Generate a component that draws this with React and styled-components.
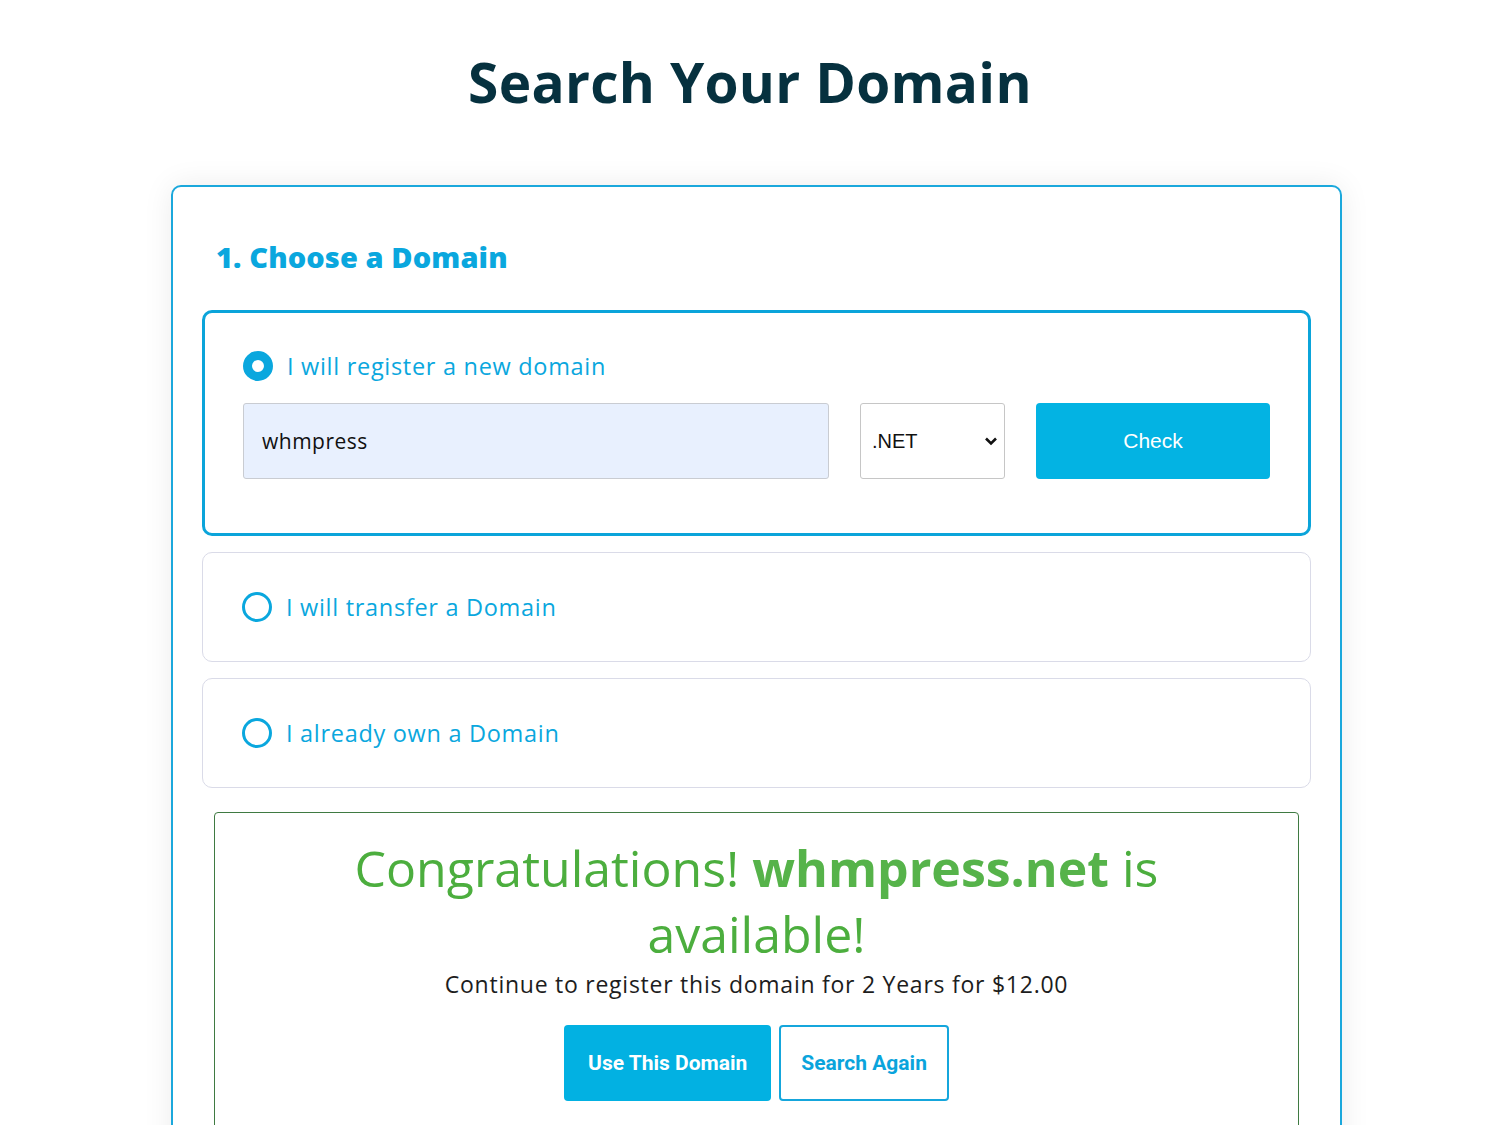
import styled, { createGlobalStyle } from 'styled-components'

const GlobalStyle = createGlobalStyle`
    body {
        margin: 0;
        background: #ffffff;
        font-family: "Open Sans", "Noto Sans", sans-serif;
    }
`

const Page = styled.main`
    padding-top: 44px;
    padding-bottom: 40px;
`

const Title = styled.h1`
    margin: 0;
    text-align: center;
    color: #06313f;
    font-size: 55px;
    font-weight: 700;
    line-height: 76px;
    letter-spacing: 0.3px;
`

const Card = styled.section`
    width: 1171px;
    box-sizing: border-box;
    margin: 65px 0 0 171px;
    padding: 0 29px 40px;
    border: 2px solid #1ba8dc;
    border-radius: 10px;
    background: #fff;
    box-shadow: 0 0 30px rgba(0, 0, 0, 0.08);
`

const StepTitle = styled.h2`
    margin: 50px 0 33px 14px;
    color: #0aa7de;
    font-size: 29px;
    font-weight: 800;
    line-height: 40px;
    letter-spacing: 0.1px;
`

const Option = styled.div`
    box-sizing: border-box;
    display: flex;
    flex-direction: column;
    gap: 22px;
    margin-top: ${({ $first }) => ($first ? '0' : '16px')};
    padding: ${({ $active }) => ($active ? '38px 38px 54px' : '39px 39px')};
    border: ${({ $active }) => ($active ? '3px solid #0ba4da' : '1px solid #dadbe8')};
    border-radius: 10px;
    background: #fff;
`

const RadioRow = styled.label`
    display: flex;
    align-items: center;
    gap: 14px;
    color: #0aa7de;
    font-size: 23.5px;
    line-height: 30px;
    letter-spacing: 0.7px;
`

const Radio = styled.span`
    box-sizing: border-box;
    width: 30px;
    height: 30px;
    border-radius: 50%;
    border: ${({ $checked }) => ($checked ? '9px' : '3px')} solid #0aa7de;
    background: #fff;
    flex-shrink: 0;
`

const SearchRow = styled.div`
    display: flex;
    gap: 31px;
    height: 76px;
`

const DomainInput = styled.div`
    box-sizing: border-box;
    width: 586px;
    display: flex;
    align-items: center;
    padding-left: 18px;
    background: #e8f0fe;
    border: 1px solid #c9ccd2;
    border-radius: 3px;
    color: #111;
    font-size: 21px;
    letter-spacing: 0.5px;
`

const TldSelect = styled.div`
    box-sizing: border-box;
    width: 145px;
    display: flex;
    align-items: center;
    justify-content: space-between;
    padding: 0 6px 0 11px;
    border: 1px solid #c6c6c6;
    border-radius: 3px;
    color: #111;
    font-family: "Liberation Sans", Arial, sans-serif;
    font-size: 20px;
`

const CheckButton = styled.button`
    width: 234px;
    border: none;
    border-radius: 4px;
    background: #03b3e3;
    color: #fff;
    font-family: "Liberation Sans", Arial, sans-serif;
    font-size: 21px;
    padding-bottom: 2px;
`

const Result = styled.div`
    margin: 24px 12px 0;
    padding: 22px 20px 40px;
    border: 1px solid #3f7a42;
    border-radius: 4px;
    text-align: center;
`

const Congrats = styled.p`
    margin: 0;
    color: #4cae3e;
    font-size: 50px;
    font-weight: 400;
    line-height: 66px;
    strong {
        font-weight: 700;
        color: #56b34a;
    }
`

const Continue = styled.p`
    margin: 0 0 24px;
    color: #1d1d1d;
    font-size: 23px;
    line-height: 34px;
    letter-spacing: 0.75px;
`

const Actions = styled.div`
    display: flex;
    justify-content: center;
    gap: 8px;
`

const ActionButton = styled.button`
    box-sizing: border-box;
    height: 76px;
    padding: 0 ${({ $outline }) => ($outline ? '20px' : '24px')};
    border: ${({ $outline }) => ($outline ? '2px solid #15a6dc' : 'none')};
    border-radius: 4px;
    background: ${({ $outline }) => ($outline ? '#fff' : '#02b1e2')};
    color: ${({ $outline }) => ($outline ? '#0aa4dc' : '#fff')};
    font-family: Roboto, "Liberation Sans", sans-serif;
    font-size: 21px;
    font-weight: 700;
`

function Chevron() {
    return (
        <svg width="14" height="10" viewBox="0 0 14 10">
            <path d="M2 2.5 L7 7.5 L12 2.5" fill="none" stroke="#111" strokeWidth="2.6" />
        </svg>
    )
}

export default function App() {
    return (
        <Page>
            <GlobalStyle />
            <Title>Search Your Domain</Title>
            <Card>
                <StepTitle>1. Choose a Domain</StepTitle>
                <Option $active $first>
                    <RadioRow>
                        <Radio $checked />
                        I will register a new domain
                    </RadioRow>
                    <SearchRow>
                        <DomainInput>whmpress</DomainInput>
                        <TldSelect>
                            .NET
                            <Chevron />
                        </TldSelect>
                        <CheckButton>Check</CheckButton>
                    </SearchRow>
                </Option>
                <Option>
                    <RadioRow>
                        <Radio />
                        I will transfer a Domain
                    </RadioRow>
                </Option>
                <Option>
                    <RadioRow>
                        <Radio />
                        I already own a Domain
                    </RadioRow>
                </Option>
                <Result>
                    <Congrats>
                        Congratulations! <strong>whmpress.net</strong> is
                        <br />
                        available!
                    </Congrats>
                    <Continue>Continue to register this domain for 2 Years for $12.00</Continue>
                    <Actions>
                        <ActionButton>Use This Domain</ActionButton>
                        <ActionButton $outline>Search Again</ActionButton>
                    </Actions>
                </Result>
            </Card>
        </Page>
    )
}
